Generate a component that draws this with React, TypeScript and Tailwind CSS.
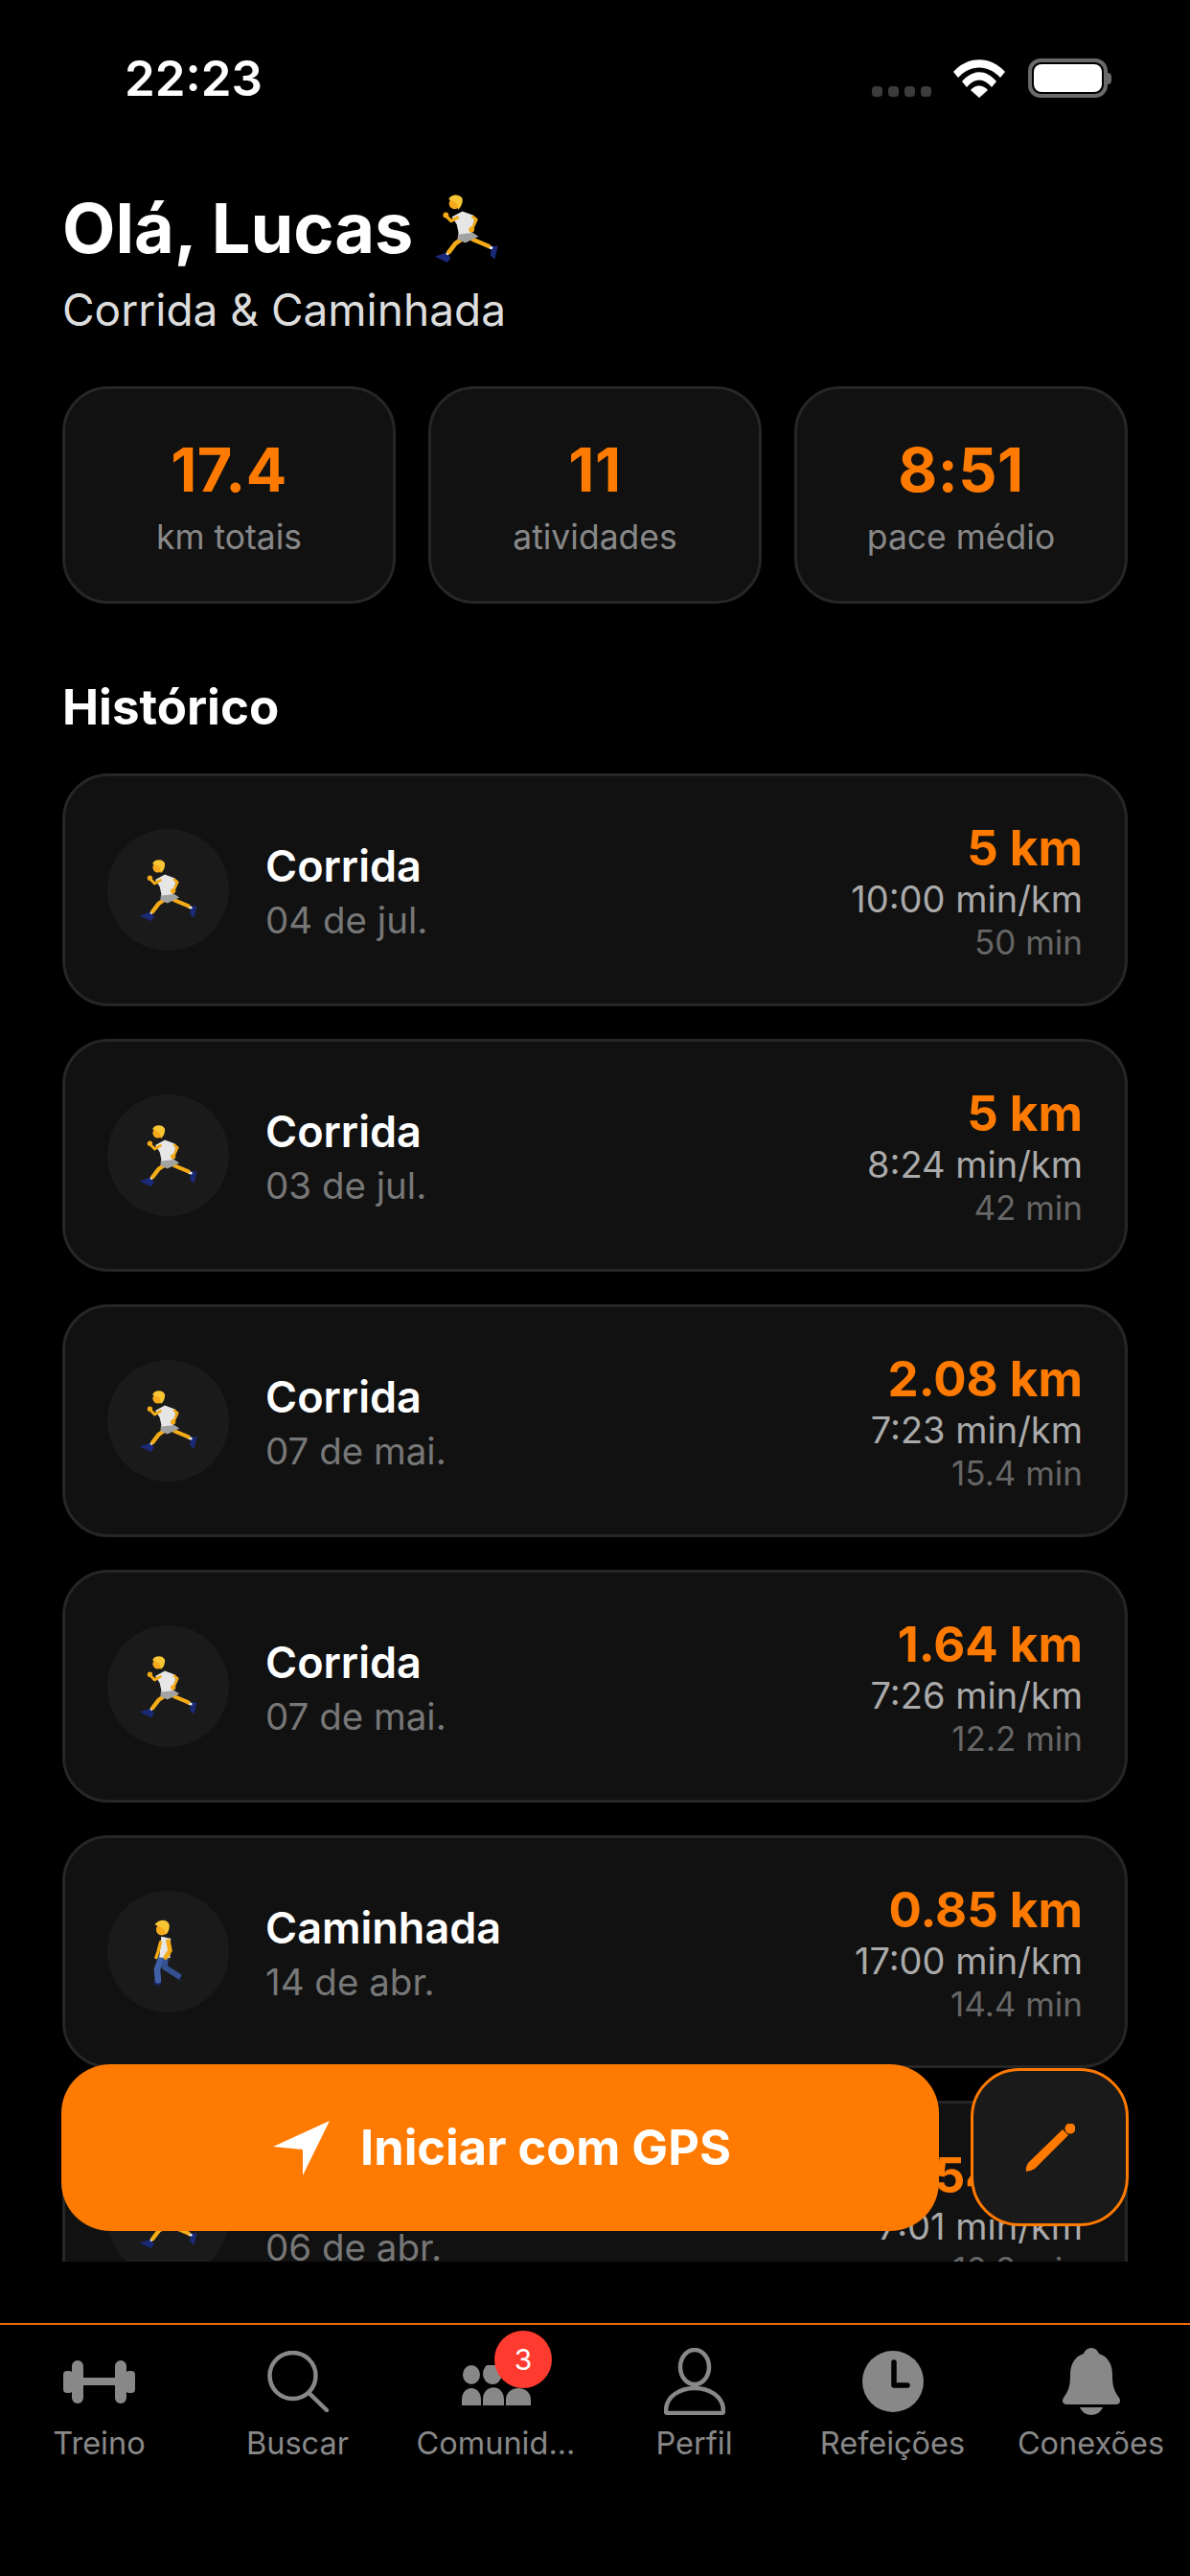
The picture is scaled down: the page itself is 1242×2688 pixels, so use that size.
const activities = [
  { kind: 'run', title: 'Corrida', date: '04 de jul.', km: '5 km', pace: '10:00 min/km', time: '50 min' },
  { kind: 'run', title: 'Corrida', date: '03 de jul.', km: '5 km', pace: '8:24 min/km', time: '42 min' },
  { kind: 'run', title: 'Corrida', date: '07 de mai.', km: '2.08 km', pace: '7:23 min/km', time: '15.4 min' },
  { kind: 'run', title: 'Corrida', date: '07 de mai.', km: '1.64 km', pace: '7:26 min/km', time: '12.2 min' },
  { kind: 'walk', title: 'Caminhada', date: '14 de abr.', km: '0.85 km', pace: '17:00 min/km', time: '14.4 min' },
  { kind: 'run', title: 'Corrida', date: '06 de abr.', km: '1.54 km', pace: '7:01 min/km', time: '10.8 min' },
];

const stats = [
  { value: '17.4', label: 'km totais' },
  { value: '11', label: 'atividades' },
  { value: '8:51', label: 'pace médio' },
];

const Runner = ({ className }: { className: string }) => (
  <svg viewBox="98 84 180 196" className={className} fill="none" strokeLinecap="round" strokeLinejoin="round">
    <path d="M101 263 L130 254 L141 267 L133 278 Z" fill="#1b2a78" stroke="#1b2a78" strokeWidth="3" />
    <path d="M261 235 L275 234 L267 268 L257 259 Z" fill="#1b2a78" stroke="#1b2a78" strokeWidth="3" />
    <path d="M134 254 L139 248" stroke="#f2f2f2" strokeWidth="9" />
    <path d="M252 236 L258 238" stroke="#f2f2f2" strokeWidth="9" />
    <path d="M176 212 L156 226 L138 250" stroke="#f4ab18" strokeWidth="13" />
    <path d="M205 214 L250 233" stroke="#f4ab18" strokeWidth="12" />
    <path d="M164 196 L198 190 L222 206 L184 224 L162 214 Z" fill="#a2a2a2" />
    <path d="M146 150 L176 134 L208 146 L210 160 L200 196 L166 200 L160 172 Z" fill="#e6e6e6" />
    <path d="M162 152 L144 162 L130 148" stroke="#f4ab18" strokeWidth="9" />
    <circle cx="129" cy="145" r="8" fill="#f4ab18" />
    <path d="M206 150 L216 158 L204 184" stroke="#f4ab18" strokeWidth="8" />
    <circle cx="202" cy="186" r="8" fill="#f4ab18" />
    <circle cx="154" cy="112" r="16" fill="#f7a91c" />
    <path d="M137 100 C141 86 168 82 176 98 C178 112 170 126 163 130 C164 116 158 106 150 106 Z" fill="#f8c534" />
  </svg>
);

const Walker = ({ className }: { className: string }) => (
  <svg viewBox="150 165 100 212" className={className} fill="none" strokeLinecap="round" strokeLinejoin="round">
    <path d="M154 362 L178 358 L178 376 L154 376 Z" fill="#1b2450" />
    <path d="M224 352 L244 336 L238 364 Z" fill="#1b2450" />
    <path d="M178 290 L165 325 L168 360" stroke="#3f5fa6" strokeWidth="20" />
    <path d="M192 296 L188 318 L232 346" stroke="#34508f" strokeWidth="18" />
    <path d="M178 222 L208 228 L206 290 L172 288 Z" fill="#e6e6e6" />
    <path d="M200 236 L206 266 L192 288" stroke="#f4ab18" strokeWidth="14" />
    <path d="M176 240 L168 270 L162 288" stroke="#f4ab18" strokeWidth="10" />
    <circle cx="180" cy="200" r="18" fill="#f7a91c" />
    <path d="M158 184 C170 164 200 166 204 186 C204 202 198 212 192 216 C190 200 184 192 174 192 Z" fill="#f8c534" />
  </svg>
);

const Dumbbell = () => (
  <svg viewBox="0 0 75 45" className="w-[75px] h-[45px]" fill="#888888">
    <rect x="0" y="11" width="10" height="23" rx="4" />
    <rect x="9" y="0" width="12" height="45" rx="6" />
    <rect x="20" y="18" width="35" height="8" />
    <rect x="54" y="0" width="12" height="45" rx="6" />
    <rect x="65" y="11" width="10" height="23" rx="4" />
  </svg>
);

const Search = () => (
  <svg viewBox="0 0 64 64" className="w-[64px] h-[64px]" fill="none" stroke="#888888" strokeWidth="4.5" strokeLinecap="round">
    <circle cx="26.5" cy="26" r="24" />
    <path d="M43.5 44 L62 62" />
  </svg>
);

const Group = () => (
  <svg viewBox="0 0 72 42" className="w-[72px] h-[42px] mt-[8px]" fill="#888888">
    <ellipse cx="10" cy="10" rx="9" ry="10" />
    <ellipse cx="32" cy="9" rx="10" ry="11" />
    <ellipse cx="54" cy="10" rx="9" ry="10" />
    <path d="M0 42 V36 C0 20 20 20 20 36 V42 Z" />
    <path d="M22 42 V36 C22 19 44 19 44 36 V42 Z" />
    <path d="M46 42 V36 C46 20 72 20 72 36 V42 Z" />
  </svg>
);

const Profile = () => (
  <svg viewBox="0 0 64 70" className="w-[64px] h-[70px]" fill="none" stroke="#888888" strokeWidth="4.5" strokeLinejoin="round">
    <ellipse cx="32" cy="20" rx="15" ry="18" />
    <path d="M2 66 C2 34 62 34 62 66 Q62 68 60 68 H4 Q2 68 2 66 Z" />
  </svg>
);

const Clock = () => (
  <svg viewBox="0 0 64 64" className="w-[64px] h-[64px]">
    <circle cx="32" cy="32" r="32" fill="#888888" />
    <path d="M33 12 V36 H47" fill="none" stroke="#000000" strokeWidth="5.5" strokeLinecap="round" strokeLinejoin="round" />
  </svg>
);

const Bell = () => (
  <svg viewBox="0 0 62 70" className="w-[62px] h-[70px]" fill="#888888">
    <path d="M31 0 C35 0 38 3 39 6 C49 9 53 18 53 28 C53 38 54 44 60 52 C62 55 61 59 57 59 H5 C1 59 0 55 2 52 C8 44 9 38 9 28 C9 18 13 9 23 6 C24 3 27 0 31 0 Z" />
    <path d="M19 62 H43 C41 67 36 70 31 70 C26 70 21 67 19 62 Z" />
  </svg>
);

const tabs = [
  { label: 'Treino', icon: <Dumbbell /> },
  { label: 'Buscar', icon: <Search /> },
  { label: 'Comunid...', icon: <Group />, badge: '3' },
  { label: 'Perfil', icon: <Profile /> },
  { label: 'Refeições', icon: <Clock /> },
  { label: 'Conexões', icon: <Bell /> },
];

const StatusBar = () => (
  <div className="h-[164px] flex items-start justify-between pl-[130px] pr-[82px]">
    <span className="mt-[52px] text-[51px] leading-[60px] font-semibold text-white">22:23</span>
    <div className="mt-[61px] flex items-end">
      <div className="flex gap-[6px] mb-[1px]">
        <span className="w-[11px] h-[11px] rounded-[4px] bg-[#3c3c3c]" />
        <span className="w-[11px] h-[11px] rounded-[4px] bg-[#3c3c3c]" />
        <span className="w-[11px] h-[11px] rounded-[4px] bg-[#3c3c3c]" />
        <span className="w-[11px] h-[11px] rounded-[4px] bg-[#3c3c3c]" />
      </div>
      <svg viewBox="0 0 54 40" className="w-[54px] h-[40px] ml-[23px]" fill="#ffffff">
        <path d="M0 13 C15 -4 39 -4 54 13 L49 19 C36 5 18 5 5 19 Z" />
        <path d="M9 23 C20 10 34 10 45 23 L40 29 C32 19 22 19 14 29 Z" />
        <path d="M18 32 C23 26 31 26 36 32 L27 40 Z" />
      </svg>
      <div className="ml-[24px] flex items-center">
        <div className="w-[83px] h-[41px] rounded-[13px] border-[4px] border-[#6a6a6a] p-[2px]">
          <div className="w-full h-full rounded-[8px] bg-white" />
        </div>
        <span className="w-[4px] h-[12px] rounded-r-[4px] bg-[#6a6a6a]" />
      </div>
    </div>
  </div>
);

const ActivityCard = ({ item }: { item: (typeof activities)[number] }) => (
  <div className="shrink-0 h-[243px] rounded-[48px] border-[3px] border-[#262626] bg-[#111111] flex items-center justify-between pl-[44px] pr-[44px]">
    <div className="flex items-center">
      <div className="w-[127px] h-[127px] rounded-full bg-[#1a1a1a] flex items-center justify-center">
        {item.kind === 'run' ? <Runner className="w-[60px] h-[65px]" /> : <Walker className="w-[33px] h-[70px]" />}
      </div>
      <div className="ml-[38px] pt-[5px]">
        <div className="text-[45px] leading-[56px] font-semibold text-white">{item.title}</div>
        <div className="mt-[2px] text-[38.5px] leading-[52px] text-[#777777]">{item.date}</div>
      </div>
    </div>
    <div className="text-right pt-[2px]">
      <div className="text-[51px] leading-[60px] font-bold text-[#ff7a00]">{item.km}</div>
      <div className="text-[38px] leading-[47px] text-[#aaaaaa]">{item.pace}</div>
      <div className="text-[35px] leading-[42px] text-[#666666]">{item.time}</div>
    </div>
  </div>
);

export default function App() {
  return (
    <div className="w-[1242px] h-[2688px] bg-black flex flex-col font-['Inter',sans-serif]">
      <div className="relative h-[2424px] shrink-0 pb-[64px]">
        <div className="h-full overflow-hidden">
          <StatusBar />
          <div className="px-[65px]">
            <div className="flex items-center h-[80px] mt-[34px]">
              <h1 className="text-[72px] leading-[80px] font-bold text-white">Olá, Lucas</h1>
              <Runner className="ml-[23px] w-[66px] h-[72px]" />
            </div>
            <p className="mt-[17px] text-[46px] leading-[56px] text-[#dddddd]">Corrida &amp; Caminhada</p>
            <div className="mt-[52px] grid grid-cols-3 gap-[34px]">
              {stats.map((stat) => (
                <div
                  key={stat.label}
                  className="h-[227px] rounded-[48px] border-[3px] border-[#262626] bg-[#111111] flex flex-col items-center pt-[46px]"
                >
                  <span className="text-[63px] leading-[76px] font-bold tracking-[0.5px] text-[#ff7a00]">{stat.value}</span>
                  <span className="mt-[11px] text-[35.5px] leading-[44px] text-[#888888]">{stat.label}</span>
                </div>
              ))}
            </div>
            <h2 className="mt-[80px] text-[51px] leading-[56px] font-bold text-white">Histórico</h2>
            <div className="mt-[41px] flex flex-col gap-[34px]">
              {activities.map((item, index) => (
                <ActivityCard key={index} item={item} />
              ))}
            </div>
          </div>
        </div>

        {/* botoes flutuantes */}
        <button className="absolute left-[64px] top-[2154px] w-[916px] h-[174px] pl-[4px] rounded-[51px] bg-[#ff7a00] flex items-center justify-center">
          <svg viewBox="0 0 59 57" className="w-[59px] h-[57px] mr-[32px]" fill="#ffffff">
            <path d="M59 0 L31 57 L31 30 L0 27 Z" />
          </svg>
          <span className="text-[50.5px] leading-[60px] font-bold text-white">Iniciar com GPS</span>
        </button>
        <button className="absolute left-[1013px] top-[2158px] w-[165px] h-[165px] rounded-[51px] border-[3px] border-[#ff7a00] bg-[#1a1a1a] flex items-center justify-center">
          <svg viewBox="0 0 52 50" className="w-[52px] h-[50px]" fill="#ff7a00">
            <path d="M39 6 L45 12 L10 47 Q5 50 1 50 Q0 46 3 41 Z" />
            <circle cx="47" cy="5" r="5.5" />
          </svg>
        </button>
      </div>

      <nav className="flex-1 border-t-[2px] border-[#e86a00] grid grid-cols-6">
        {tabs.map((tab) => (
          <div key={tab.label} className="relative flex flex-col items-center">
            <div className="h-[70px] mt-[24px] flex items-center justify-center">{tab.icon}</div>
            <span className="mt-[8px] text-[32.5px] leading-[44px] text-[#888888] whitespace-nowrap">
              {tab.label}
            </span>
            {tab.badge && (
              <span className="absolute left-[102px] top-[6px] w-[60px] h-[60px] rounded-full bg-[#ff3b30] flex items-center justify-center text-[30px] leading-[36px] text-white">
                {tab.badge}
              </span>
            )}
          </div>
        ))}
      </nav>
    </div>
  );
}
